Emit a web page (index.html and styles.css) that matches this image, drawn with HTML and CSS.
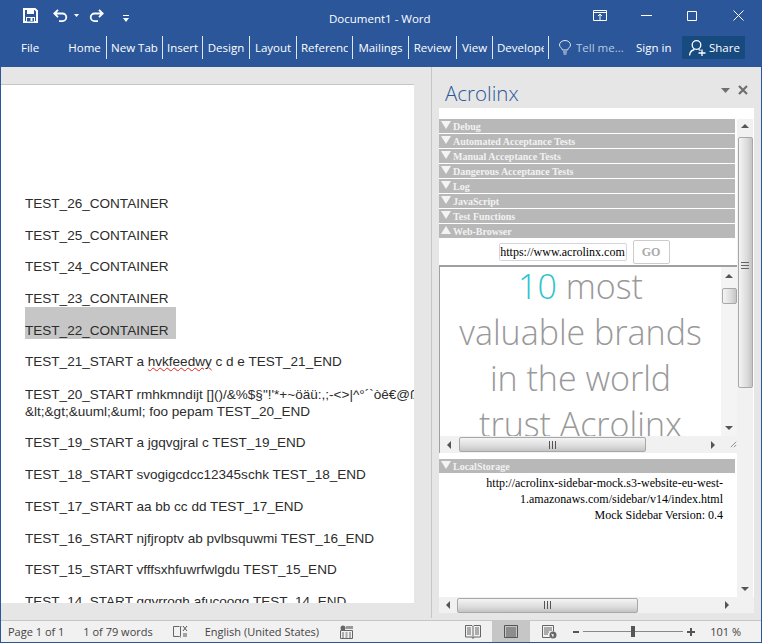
FILE: index.html
```html
<!DOCTYPE html>
<html lang="en">
<head>
<meta charset="utf-8">
<title>Document1 - Word</title>
<link rel="stylesheet" href="styles.css">
</head>
<body>
<div class="app">
  <header class="titlebar">
    <div class="qat">
      <svg class="ico-save" width="15" height="15" viewBox="0 0 15 15"><path d="M1 1h11l2 2v11H1z" fill="none" stroke="#fff" stroke-width="2"/><rect x="4" y="1" width="7" height="5" fill="#fff"/><rect x="3.500" y="9.500" width="8" height="4.500" fill="#2b579a" stroke="#fff"/><rect x="7.500" y="10" width="2" height="3" fill="#fff"/></svg>
      <svg class="ico-undo" width="15" height="13" viewBox="0 0 15 13"><path d="M5 .8 1.300 4.500 5 8.200M2 4.500h7.500a3.800 3.800 0 0 1 0 7.600H6" fill="none" stroke="#fff" stroke-width="1.800"/></svg>
      <svg class="ico-drop" width="5" height="3" viewBox="0 0 5 3"><path d="M0 0h5L2.500 3z" fill="#fff"/></svg>
      <svg class="ico-redo" width="15" height="13" viewBox="0 0 15 13"><path d="M10 .8 13.700 4.500 10 8.200M13 4.500H5.500a3.800 3.800 0 0 0 0 7.600H9" fill="none" stroke="#fff" stroke-width="1.800"/></svg>
      <svg class="ico-custom" width="6" height="7" viewBox="0 0 6 7"><path d="M0 0h6V1H0zM0 3h6L3 7z" fill="#fff"/></svg>
    </div>
    <div class="doc-title">Document1 - Word</div>
    <div class="winctl">
      <svg width="14" height="11" viewBox="0 0 14 11"><path d="M.5.5h13v10H.5zM1 2.500h12M7 10V4.500M5 6 7 4.200 9 6" fill="none" stroke="#fff"/></svg>
      <svg width="11" height="11" viewBox="0 0 11 11"><path d="M0 5.500h11" stroke="#fff"/></svg>
      <svg width="10" height="10" viewBox="0 0 10 10"><path d="M.5.5h9v9h-9z" fill="none" stroke="#fff"/></svg>
      <svg width="11" height="11" viewBox="0 0 11 11"><path d="M.5.500 10.500 10.500M10.500.500 .5 10.500" stroke="#fff"/></svg>
    </div>
  </header>
  <nav class="ribbon">
    <span class="file">File</span>
    <div class="tabs">
      <span class="tab">Home</span>
      <span class="tab">New Tab</span>
      <span class="tab">Insert</span>
      <span class="tab">Design</span>
      <span class="tab">Layout</span>
      <span class="tab cut"><span>Reference</span></span>
      <span class="tab">Mailings</span>
      <span class="tab">Review</span>
      <span class="tab">View</span>
      <span class="tab cut"><span>Developer</span></span>
    </div>
    <svg class="bulb" width="12" height="15" viewBox="0 0 12 15"><path d="M3.500 10C3 8 .5 7 .5 5a5.500 4.500 0 0 1 11 0c0 2-2.500 3-3 5zM4 12h4M4.500 14h3" fill="none" stroke="#dfe7f2"/></svg>
    <span class="tell">Tell me...</span>
    <span class="signin">Sign in</span>
    <span class="share">
      <svg width="17" height="16" viewBox="0 0 17 16"><circle cx="7.500" cy="5" r="4.300" fill="none" stroke="#fff" stroke-width="1.300"/><path d="M.5 15.500c.5-3.500 2.500-5.500 5-6M9.500 9.500c.8.300 1.400.6 2 1.100M9.500 13h7M13 9.500V16" fill="none" stroke="#fff" stroke-width="1.300"/></svg>
      <span>Share</span>
    </span>
  </nav>
  <main class="workspace">
    <section class="docview">
      <div class="page">
        <p>TEST_26_CONTAINER</p>
        <p>TEST_25_CONTAINER</p>
        <p>TEST_24_CONTAINER</p>
        <p>TEST_23_CONTAINER</p>
        <p class="selected-wrap"><span class="selected">TEST_22_CONTAINER</span></p>
        <p>TEST_21_START a <span class="spell">hvkfeedwy</span> c d e TEST_21_END</p>
        <p class="multi">TEST_20_START rmhkmndijt []()/&amp;%$§"!'*+~öäü:,;-&lt;&gt;|^°´`òê€@ß<br>&amp;lt;&amp;gt;&amp;uuml;&amp;uml; foo pepam TEST_20_END</p>
        <p>TEST_19_START a jgqvgjral c TEST_19_END</p>
        <p>TEST_18_START svogigcdcc12345schk TEST_18_END</p>
        <p>TEST_17_START aa bb cc dd TEST_17_END</p>
        <p>TEST_16_START njfjroptv ab pvlbsquwmi TEST_16_END</p>
        <p>TEST_15_START vfffsxhfuwrfwlgdu TEST_15_END</p>
        <p>TEST_14_START qqyrrogh afucoogg TEST_14_END</p>
      </div>
    </section>
    <aside class="pane">
      <div class="pane-head">
        <span class="pane-title">Acrolinx</span>
        <svg class="pane-menu" width="9" height="5" viewBox="0 0 9 5"><path d="M0 0h9L4.500 5z" fill="#6f6f6f"/></svg>
        <svg class="pane-close" width="10" height="10" viewBox="0 0 10 10"><path d="M1 1 9 9M9 1 1 9" stroke="#6f6f6f" stroke-width="2.200"/></svg>
      </div>
      <div class="pane-body">
        <div class="strip"></div>
        <div class="outer">
          <div class="sections">
            <div class="sec"><i class="down"></i>Debug</div>
            <div class="sec"><i class="down"></i>Automated Acceptance Tests</div>
            <div class="sec"><i class="down"></i>Manual Acceptance Tests</div>
            <div class="sec"><i class="down"></i>Dangerous Acceptance Tests</div>
            <div class="sec"><i class="down"></i>Log</div>
            <div class="sec"><i class="down"></i>JavaScript</div>
            <div class="sec"><i class="down"></i>Test Functions</div>
            <div class="sec"><i class="up"></i>Web-Browser</div>
            <div class="urlrow">
              <span class="url">https://www.acrolinx.com</span>
              <span class="go">GO</span>
            </div>
            <div class="frame">
              <div class="frame-main">
                <div class="frame-text">
                  <div><span class="teal">10</span> most</div>
                  <div>valuable brands</div>
                  <div>in the world</div>
                  <div>trust Acrolinx</div>
                </div>
                <div class="vbar small">
                  <i class="arr-up"></i>
                  <div class="vthumb tiny"></div>
                  <i class="arr-down"></i>
                </div>
              </div>
              <div class="hbar frame-h">
                <i class="arr-left"></i>
                <div class="hthumb frame-thumb"><b></b></div>
                <i class="arr-right"></i>
                <svg class="grip" width="9" height="9" viewBox="0 0 9 9"><path d="M1 8 8 1M5 8 8 5" stroke="#777"/></svg>
              </div>
            </div>
            <div class="sec local"><i class="down"></i>LocalStorage</div>
            <div class="storage">
              <div>http://acrolinx-sidebar-mock.s3-website-eu-west-</div>
              <div>1.amazonaws.com/sidebar/v14/index.html</div>
              <div>Mock Sidebar Version: 0.4</div>
            </div>
          </div>
          <div class="vbar main">
            <i class="arr-up"></i>
            <div class="vthumb long"><b></b></div>
            <i class="arr-down"></i>
          </div>
        </div>
        <div class="hbar outer-h">
          <i class="arr-left"></i>
          <div class="hthumb outer-thumb"><b></b></div>
          <i class="arr-right"></i>
        </div>
      </div>
    </aside>
  </main>
  <footer class="status">
    <span class="st page-no">Page 1 of 1</span>
    <span class="st words">1 of 79 words</span>
    <svg class="proof" width="16" height="15" viewBox="0 0 16 15"><path d="M7.500 2.500H1.500v10h6l1 1M9.500 2.500H8.500v10" fill="none" stroke="#666"/><path d="M11 2l4 5M15 2l-4 5M11 10h4M11 12h4" stroke="#555"/></svg>
    <span class="st lang">English (United States)</span>
    <svg class="macro" width="13" height="14" viewBox="0 0 13 14"><circle cx="3" cy="3" r="2.500" fill="#666"/><path d="M6 1h7v3H6z" fill="#999"/><path d="M.5 5.500h12v8H.5zM2 8h2M5.500 8h2M9 8h2M2 10h2M5.500 10h2M9 10h2M2 12h2M5.500 12h2M9 12h2" fill="none" stroke="#666"/></svg>
    <span class="spacer"></span>
    <span class="view">
      <svg width="16" height="14" viewBox="0 0 16 14"><path d="M.5.500h6.500l1 1 1-1h6.500v11.500H9l-1 1.500-1-1.500H.5zM8 1.500V12M2 3h4M2 5h4M2 7h4M2 9h4M10 3h4M10 5h4M10 7h4M10 9h4" fill="none" stroke="#666"/></svg>
    </span>
    <span class="view active">
      <svg width="14" height="13" viewBox="0 0 14 13"><path d="M.5.500h13v12H.5zM2 3h10M2 5h10M2 7h10M2 9h10M2 11h10" fill="none" stroke="#555"/></svg>
    </span>
    <span class="view">
      <svg width="15" height="14" viewBox="0 0 15 14"><path d="M8 12.500H.5V.5h11v6M2 3h8M2 5h8M2 7h5M2 9h4" fill="none" stroke="#666"/><circle cx="11" cy="10" r="3.500" fill="#666"/><path d="M9 8.500l3 1-1 3z" fill="#eee"/></svg>
    </span>
    <span class="minus"></span>
    <span class="slider"><span class="knob"></span></span>
    <span class="plus"></span>
    <span class="st zoom">101 %</span>
  </footer>
</div>
</body>
</html>
```
FILE: styles.css
```css
* { box-sizing: border-box; }
html, body { margin: 0; padding: 0; background: #2b579a; }
body { font-family: "Open Sans", "Noto Sans", sans-serif; overflow: hidden; }
i { display: block; font-style: normal; }

.app {
  width: 762px; height: 643px;
  display: flex; flex-direction: column;
  background: #2b579a;
  padding: 0 1px 1px 1px;
}

/* title bar */
.titlebar { height: 31px; display: flex; align-items: center; position: relative; flex: none; }
.qat { display: flex; align-items: center; padding-left: 22px; }
.ico-undo { margin-left: 15px; }
.ico-drop { margin-left: 6px; }
.ico-redo { margin-left: 10px; }
.ico-custom { margin-left: 19px; margin-top: 5px; }
.doc-title { color: #fff; font-size: 11.500px; position: absolute; left: 328px; top: 11px; line-height: 16px; }
.winctl { position: absolute; left: 592px; top: 10px; width: 165px; display: flex; align-items: center; }
.winctl svg:nth-child(2) { margin-left: 34px; }
.winctl svg:nth-child(3) { margin-left: 35px; }
.winctl svg:nth-child(4) { margin-left: 36px; }

/* ribbon */
.ribbon {
  height: 36px; flex: none;
  display: flex; align-items: flex-start;
  color: #fff; font-size: 11.500px; line-height: 23px;
  padding-top: 5px;
}
.file { margin-left: 20px; width: 42px; flex: none; }
.tabs { display: grid; grid-template-columns: 44px 56px 40px 47px 47px 56px 56px 48px 36px 56px; flex: none; }
.tab { border-right: 1px solid #dfe7f2; height: 23px; white-space: nowrap; text-align: center; }
.tab.cut { padding-left: 4px; text-align: left; }
.tab.cut span { display: block; width: 47px; overflow: hidden; }
.bulb { margin-left: 10px; margin-top: 4px; flex: none; }
.tell { margin-left: 5px; color: #b9c9e0; width: 60px; white-space: nowrap; flex: none; }
.signin { width: 46px; white-space: nowrap; flex: none; }
.share {
  width: 63px; height: 23px; background: #174a7f; flex: none;
  display: flex; align-items: center; gap: 3px; padding-left: 7px;
}

/* workspace */
.workspace { flex: 1; display: flex; min-height: 0; background: #e6e6e6; }
.docview {
  width: 431px; flex: none;
  border-right: 1px solid #c6c6c6;
  padding: 17px 17px 15px 0;
  margin-bottom: 2px;
}
.page {
  height: 100%; background: #fff;
  border-top: 1px solid #c6c6c6;
  overflow: hidden;
  padding: 110px 0 0 24px;
  font-family: "Liberation Sans", Arial, sans-serif;
  font-size: 13.550px; line-height: 17px; color: #2c2c2c;
  white-space: nowrap;
}
.page p { margin: 0 0 14.700px; }
.selected { display: inline-block; width: 151px; height: 32px; margin-top: -15px; padding-top: 15px; background: #c6c6c6; vertical-align: top; }
.page p.selected-wrap { margin-bottom: 14px; }
.page p.multi { margin-top: 16px; }
.spell { text-decoration: underline wavy #e02020 1px; text-underline-offset: 1px; }

/* task pane */
.pane { flex: 1; min-width: 0; display: flex; flex-direction: column; padding: 0 7px 7px 7px; }
.pane-head { height: 41px; flex: none; display: flex; align-items: flex-start; }
.pane-title { font-size: 20.500px; font-weight: 300; color: #2b579a; line-height: 28px; margin: 12px 0 0 6px; }
.pane-menu { margin: 21px 0 0 auto; }
.pane-close { margin: 18px 6px 0 8px; }
.pane-body { flex: 1; min-height: 0; background: #fff; display: flex; flex-direction: column; }
.strip { height: 11px; flex: none; }
.outer { flex: 1; min-height: 0; display: flex; gap: 2px; }
.sections { width: 296px; flex: none; }
.sec {
  height: 14px; margin-bottom: 1px; background: #b8b8b8;
  color: #f2f2f2; font: bold 10px/15px "Liberation Serif", serif;
  display: flex; align-items: center;
  white-space: nowrap;
}
.down, .up { width: 0; height: 0; border-left: 5px solid transparent; border-right: 5px solid transparent; margin: 0 2px 0 2px; flex: none; }
.down { border-top: 8px solid #f4f4f4; margin-top: -2px; }
.up { border-bottom: 8px solid #f4f4f4; margin-top: -2px; }

.urlrow { height: 27px; margin-top: -1px; display: flex; align-items: center; justify-content: center; gap: 6px; padding-right: 6px; }
.url {
  width: 128px; height: 18px; border: 1px solid #d5d5e0; border-radius: 2px;
  font: 12px/16px "Liberation Serif", serif; color: #000;
  text-align: center; white-space: nowrap; overflow: hidden;
}
.go {
  width: 37px; height: 24px; border: 1px solid #ccc; border-radius: 2px;
  font: bold 12px/22px "Liberation Serif", serif; color: #aaa; text-align: center;
}

.frame { width: 298px; height: 188px; margin-bottom: 6px; border-top: 2px solid #a0a0a0; border-left: 1px solid #a0a0a0; }
.frame-main { height: 169px; display: flex; }
.frame-text {
  flex: 1; min-width: 0; overflow: hidden; text-align: center; color: #999;
  font-size: 34px; font-weight: 300; line-height: 46px; white-space: nowrap;
  padding-top: 0; height: 169px;
}
.frame-text > div:first-child { margin-top: -4px; }
.teal { color: #2cc4cb; }

.vbar { width: 16px; flex: none; background: #f1f1f1; display: flex; flex-direction: column; align-items: center; }
.vbar.small { background: #f4f4f4; }
.vbar.main { padding-top: 5px; }
.arr-up, .arr-down, .arr-left, .arr-right { width: 0; height: 0; flex: none; }
.arr-up { border-left: 4px solid transparent; border-right: 4px solid transparent; border-bottom: 4px solid #555; margin: 7px 0 10px; }
.vbar.main .arr-up { margin: 0 0 9px; }
.arr-down { border-left: 4px solid transparent; border-right: 4px solid transparent; border-top: 4px solid #555; margin: auto 0 6px; }
.vthumb { width: 15px; background: linear-gradient(90deg, #f4f4f4, #dcdcdc 60%, #c4c4c4); border: 1px solid #a8a8a8; border-radius: 2px; flex: none; display: flex; align-items: center; justify-content: center; }
.vthumb.tiny { height: 16px; }
.vthumb.long { height: 251px; align-items: flex-end; padding-bottom: 117px; }
.vthumb b { width: 8px; height: 8px; background: repeating-linear-gradient(#666 0 1px, transparent 1px 3px); }

.hbar { display: flex; align-items: center; background: #f1f1f1; flex: none; }
.frame-h { height: 17px; }
.outer-h { height: 16px; }
.arr-left { border-top: 4px solid transparent; border-bottom: 4px solid transparent; border-right: 4px solid #555; margin-left: 7px; }
.arr-right { border-top: 4px solid transparent; border-bottom: 4px solid transparent; border-left: 4px solid #555; }
.hthumb { height: 15px; background: linear-gradient(#f4f4f4, #dcdcdc 60%, #c4c4c4); border: 1px solid #a8a8a8; border-radius: 2px; display: flex; align-items: center; justify-content: center; flex: none; }
.hthumb b { width: 8px; height: 8px; background: repeating-linear-gradient(90deg, #555 0 1px, transparent 1px 3px); }
.frame-thumb { width: 187px; margin-left: 8px; }
.frame-h .arr-right { margin-left: 65px; }
.grip { margin-left: 15px; }
.outer-thumb { width: 181px; margin-left: 7px; }
.outer-h .arr-right { margin-left: 87px; }

.storage {
  font: 12px/16px "Liberation Serif", serif; color: #000;
  text-align: right; padding: 1px 12px 0 0; white-space: nowrap;
}

/* status bar */
.status {
  height: 22px; flex: none; background: #f1f1f1;
  border-top: 1px solid #c6c6c6;
  display: flex; align-items: center;
  font-size: 11px; color: #444; white-space: nowrap;
}
.st { line-height: 20px; }
.page-no { margin-left: 7px; }
.words { margin-left: 19px; }
.proof { margin-left: 19px; }
.lang { margin-left: 17px; }
.macro { margin-left: 21px; }
.spacer { flex: 1; }
.view { width: 38px; height: 21px; display: flex; align-items: center; justify-content: center; flex: none; }
.view.active { background: #c6c6c6; }
.minus { width: 6px; height: 2px; background: #555; margin-left: 5px; flex: none; }
.slider { width: 100px; height: 1px; background: #888; margin-left: 4px; position: relative; flex: none; }
.knob { position: absolute; left: 48px; top: -5px; width: 4px; height: 11px; background: #555; }
.plus { width: 8px; height: 8px; margin-left: 4px; flex: none; background: linear-gradient(#555,#555) center/100% 2px no-repeat, linear-gradient(#555,#555) center/2px 100% no-repeat; }
.zoom { margin: 0 20px 0 15px; }
```
